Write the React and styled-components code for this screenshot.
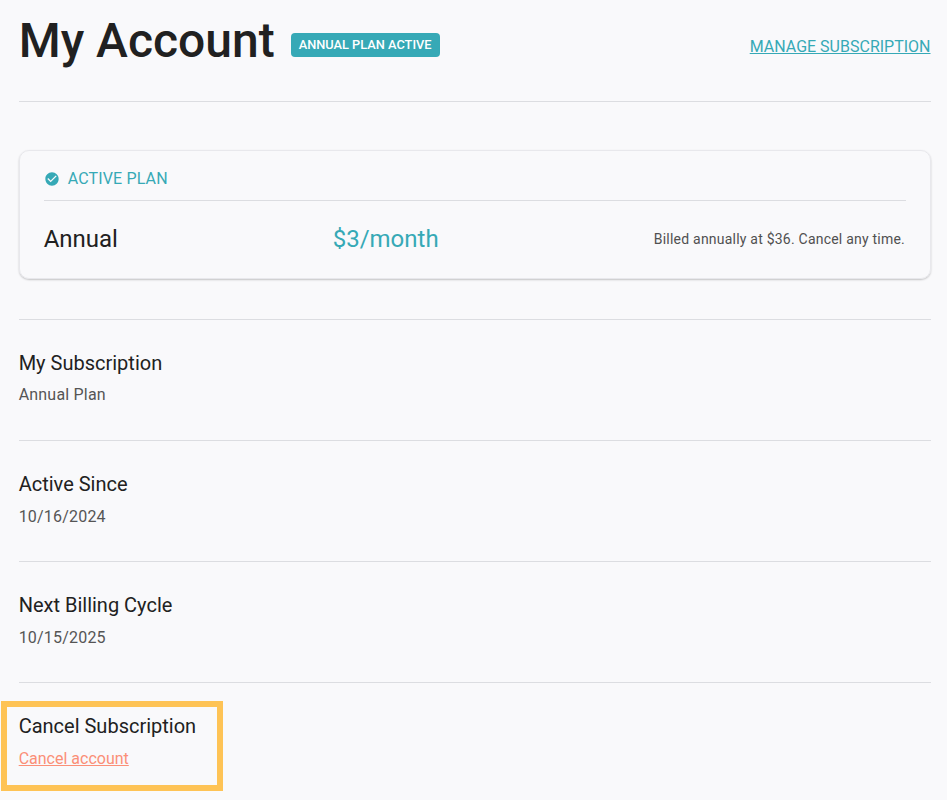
import styled, { createGlobalStyle } from "styled-components";

const GlobalStyle = createGlobalStyle`
  html, body {
    margin: 0;
    background: #f9f9fb;
    font-family: Roboto, "Liberation Sans", sans-serif;
    color: #212121;
  }
  * {
    box-sizing: border-box;
  }
`;

const teal = "#36a9b6";

const Page = styled.div`
  padding: 0 16px 0 18.67px;
  height: 800px;
  overflow: hidden;
`;

const Header = styled.header`
  display: flex;
  align-items: center;
  height: 101px;
  padding-bottom: 20px;
`;

const Title = styled.h1`
  margin: 0;
  font-size: 48px;
  line-height: 56px;
  font-weight: 500;
  color: #212121;
`;

const Badge = styled.span`
  margin: 8px 0 0 16px;
  height: 24px;
  padding: 0 8px;
  display: flex;
  align-items: center;
  background: ${teal};
  border-radius: 4px;
  color: #fff;
  font-size: 12.8px;
  font-weight: 500;
`;

const ManageLink = styled.a`
  margin: 12px 0.5px 0 auto;
  color: ${teal};
  font-size: 16px;
  line-height: 24px;
  text-decoration: underline;
`;

const Divider = styled.hr`
  margin: 0;
  border: 0;
  height: 1px;
  background: #dcdde1;
`;

const PlanCard = styled.section`
  margin: 48px 0 40px;
  height: 129px;
  padding: 8px 24px 0;
  border-radius: 10px;
  border: 1px solid #e8e8ec;
  box-shadow: 0 1px 2px rgba(0, 0, 0, 0.22);
`;

const PlanHead = styled.div`
  display: flex;
  align-items: center;
  gap: 8px;
  height: 41px;
  padding-bottom: 2px;
  color: ${teal};
  font-size: 16px;
  letter-spacing: 0.15px;
`;

const PlanRow = styled.div`
  display: grid;
  grid-template-columns: 289px 1fr auto;
  align-items: center;
  height: 76px;
  padding-right: 1px;
`;

const PlanName = styled.span`
  font-size: 24px;
  color: #212121;
`;

const PlanPrice = styled.span`
  font-size: 24px;
  color: ${teal};
`;

const PlanNote = styled.span`
  font-size: 14px;
  letter-spacing: 0.22px;
  color: #505050;
`;

const InfoBlock = styled.section`
  height: 120px;
  padding-top: 29px;
`;

const InfoTitle = styled.div`
  font-size: 20px;
  line-height: 28px;
  color: #212121;
`;

const InfoValue = styled.div`
  margin-top: ${(props) => props.$gap}px;
  font-size: 16px;
  line-height: 24px;
  letter-spacing: 0.2px;
  color: #555;
`;

const Highlight = styled.section`
  margin: 18px 0 0 -18px;
  width: 222px;
  height: 90px;
  padding: 5px 0 0 12px;
  border: 6px solid #fec355;
`;

const CancelLink = styled.a`
  display: block;
  margin-top: 7px;
  color: #fb8f77;
  font-size: 16px;
  line-height: 24px;
  text-decoration: underline;
`;

function CheckCircle() {
  return (
    <svg width="16" height="16" viewBox="0 0 24 24" fill={teal} aria-hidden="true">
      <path d="M12 2C6.48 2 2 6.48 2 12s4.48 10 10 10 10-4.48 10-10S17.52 2 12 2zm-2 15-5-5 1.41-1.41L10 14.17l7.59-7.59L19 8l-9 9z" />
    </svg>
  );
}

const details = [
  { title: "My Subscription", value: "Annual Plan", gap: 6 },
  { title: "Active Since", value: "10/16/2024", gap: 7 },
  { title: "Next Billing Cycle", value: "10/15/2025", gap: 7 },
];

export default function App() {
  return (
    <Page>
      <GlobalStyle />
      <Header>
        <Title>My Account</Title>
        <Badge>ANNUAL PLAN ACTIVE</Badge>
        <ManageLink href="#">MANAGE SUBSCRIPTION</ManageLink>
      </Header>
      <Divider />
      <PlanCard>
        <PlanHead>
          <CheckCircle />
          ACTIVE PLAN
        </PlanHead>
        <Divider />
        <PlanRow>
          <PlanName>Annual</PlanName>
          <PlanPrice>$3/month</PlanPrice>
          <PlanNote>Billed annually at $36. Cancel any time.</PlanNote>
        </PlanRow>
      </PlanCard>
      {details.map((item) => (
        <div key={item.title}>
          <Divider />
          <InfoBlock>
            <InfoTitle>{item.title}</InfoTitle>
            <InfoValue $gap={item.gap}>{item.value}</InfoValue>
          </InfoBlock>
        </div>
      ))}
      <Divider />
      <Highlight>
        <InfoTitle>Cancel Subscription</InfoTitle>
        <CancelLink href="#">Cancel account</CancelLink>
      </Highlight>
    </Page>
  );
}
